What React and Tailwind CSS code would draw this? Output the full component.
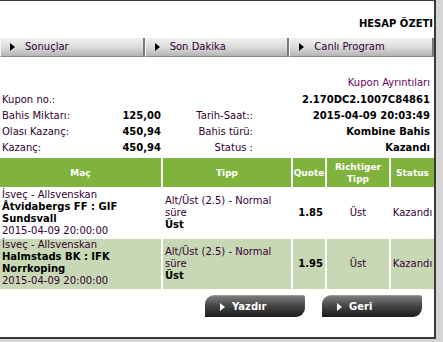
const navItems = ['Sonuçlar', 'Son Dakika', 'Canlı Program']

const summaryRows = [
  { label: 'Bahis Miktarı:', value: '125,00', label2: 'Tarih-Saat::', value2: '2015-04-09 20:03:49' },
  { label: 'Olası Kazanç:', value: '450,94', label2: 'Bahis türü:', value2: 'Kombine Bahis' },
  { label: 'Kazanç:', value: '450,94', label2: 'Status :', value2: 'Kazandı' },
]

const bets = [
  { league: 'İsveç - Allsvenskan', match: 'Åtvidabergs FF : GIF Sundsvall', date: '2015-04-09 20:00:00', quote: '1.85', alt: false, h: 'h-[48px]' },
  { league: 'İsveç - Allsvenskan', match: 'Halmstads BK : IFK Norrkoping', date: '2015-04-09 20:00:00', quote: '1.95', alt: true, h: 'h-[50px]' },
]

const cols = 'grid grid-cols-[161px_128px_32px_62px_43px] gap-x-[2px]'

const Triangle = ({ white }) => (
  <span
    className={`inline-block w-0 h-0 border-y-[4px] border-y-transparent border-l-[5px] ${white ? 'border-l-white' : 'border-l-black'}`}
  />
)

const ActionButton = ({ label }) => (
  <button className="w-[100px] h-[22px] flex items-center gap-[7px] pl-[15px] rounded-tl-[9px] rounded-tr-[2px] rounded-br-[9px] bg-gradient-to-b from-[#7c7c7c] via-[#444] to-[#1c1c1c] border-t border-[#9a9a9a] text-white font-bold text-[10px]">
    <Triangle white />
    <span>{label}</span>
  </button>
)

export default function App() {
  return (
    <div className="w-[443px] h-[342px] bg-[#d5d5d5] font-['DejaVu_Sans',sans-serif] text-[10px] leading-[12px] text-[#330033]">
      <div className="w-[436px] h-[339px] bg-white border-t border-r-2 border-b-2 border-[#3a3a3a]">
        {/* title */}
        <div className="pt-[17px] pr-[1px] text-right font-bold text-black">HESAP ÖZETI</div>

        {/* nav */}
        <div className="mt-[8px] grid grid-cols-3 h-[19px]">
          {navItems.map((item) => (
            <div
              key={item}
              className="flex items-center gap-[10px] pl-[9px] bg-gradient-to-b from-[#f2f2f2] via-[#dcdcdc] to-[#b4b4b4] border-l border-l-[#f8f8f8] border-r-2 border-r-[#7a7a7a] border-b border-b-[#8a8a8a]"
            >
              <Triangle />
              <span>{item}</span>
            </div>
          ))}
        </div>

        {/* coupon details */}
        <div className="mt-[20px] pr-[4px] text-right text-[#660066]">Kupon Ayrıntıları</div>
        <div className="mt-[3px] flex justify-between items-center h-[16px] pl-[2px] pr-[4px]">
          <span>Kupon no.:</span>
          <span className="font-bold text-black">2.170DC2.1007C84861</span>
        </div>
        {summaryRows.map((r) => (
          <div key={r.label} className="grid grid-cols-[161px_92px_177px] items-center h-[16px]">
            <div className="flex justify-between pl-[2px]">
              <span>{r.label}</span>
              <span className="font-bold text-black">{r.value}</span>
            </div>
            <div className="text-right">{r.label2}</div>
            <div className="text-right font-bold text-black">{r.value2}</div>
          </div>
        ))}

        {/* bets table */}
        <div className="mt-[2px] flex flex-col gap-y-[2px]">
          <div className={`${cols} h-[29px] text-white font-bold text-[9px] leading-[12px]`}>
            <div className="bg-[#80b33d] flex items-center justify-center">Maç</div>
            <div className="bg-[#80b33d] flex items-center justify-center">Tipp</div>
            <div className="bg-[#80b33d] flex items-center justify-center">Quote</div>
            <div className="bg-[#80b33d] flex items-center justify-center text-center">
              Richtiger
              <br />
              Tipp
            </div>
            <div className="bg-[#80b33d] flex items-center justify-center">Status</div>
          </div>
          {bets.map((b, i) => {
            const bg = b.alt ? 'bg-[#c9d8b4]' : 'bg-white'
            return (
              <div key={i} className={`${cols} ${b.h}`}>
                <div className={`${bg} pl-[2px]`}>
                  <div>{b.league}</div>
                  <div className="font-bold text-black">{b.match}</div>
                  <div>{b.date}</div>
                </div>
                <div className={`${bg} pl-[2px] flex flex-col justify-center`}>
                  <div>Alt/Üst (2.5) - Normal süre</div>
                  <div className="font-bold text-black">Üst</div>
                </div>
                <div className={`${bg} pr-[2px] flex items-center justify-end font-bold text-black`}>{b.quote}</div>
                <div className={`${bg} flex items-center justify-center`}>Üst</div>
                <div className={`${bg} flex items-center justify-center`}>Kazandı</div>
              </div>
            )
          })}
        </div>

        {/* actions */}
        <div className="mt-[6px] pr-[12px] flex justify-end gap-[17px]">
          <ActionButton label="Yazdır" />
          <ActionButton label="Geri" />
        </div>
      </div>
    </div>
  )
}
